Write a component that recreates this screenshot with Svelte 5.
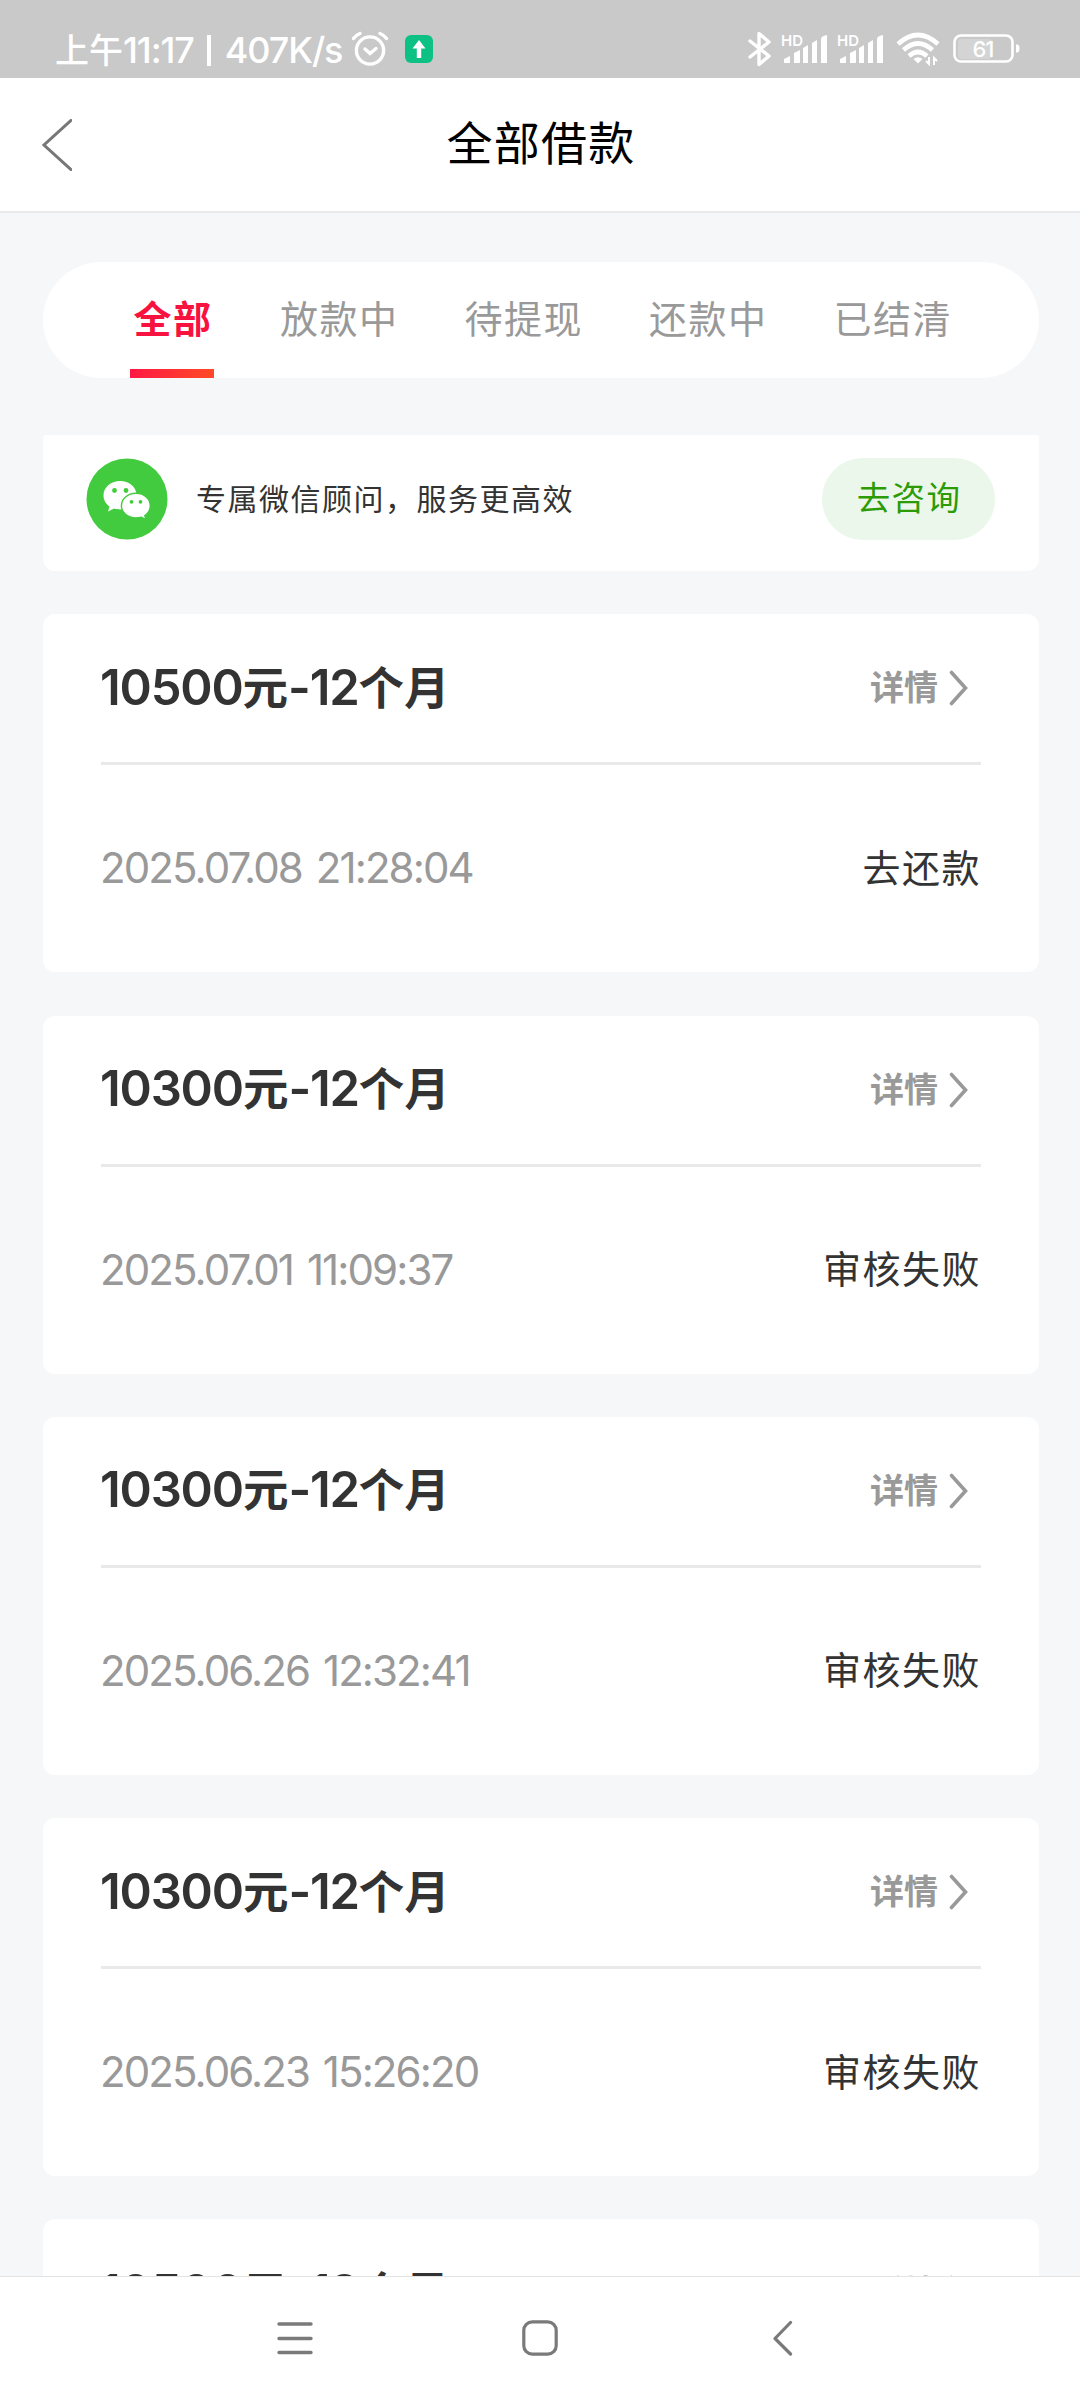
<script lang="ts">
  type Loan = { amount: string; term: string; time: string; status: string };

  const tabs = ['全部', '放款中', '待提现', '还款中', '已结清'];
  let active = $state(0);

  const loans: Loan[] = [
    { amount: '10500', term: '12', time: '2025.07.08 21:28:04', status: '去还款' },
    { amount: '10300', term: '12', time: '2025.07.01 11:09:37', status: '审核失败' },
    { amount: '10300', term: '12', time: '2025.06.26 12:32:41', status: '审核失败' },
    { amount: '10300', term: '12', time: '2025.06.23 15:26:20', status: '审核失败' },
    { amount: '10500', term: '12', time: '2025.06.20 10:15:36', status: '审核失败' }
  ];
</script>

{#snippet signal()}
  <svg class="signal" viewBox="0 0 46 32" fill="#fff">
    <text x="-1" y="13" font-size="15" font-weight="600" font-family="Inter, sans-serif">HD</text>
    <path d="M2 30v-4l6-3v7zM12 30V20l6-3v13zM21 30V15l5-3v18zM30 30V10l5-3v23zM39 30V6q0-3 6-4v28z" />
  </svg>
{/snippet}

<div class="screen">
  <div class="status-bar">
    <span class="clock">上午<span class="latin">11:17 <i></i> 407K/s</span></span>
    <svg class="alarm" viewBox="0 0 38 36" fill="none" stroke="#fff" stroke-width="3.4" stroke-linecap="round">
      <circle cx="19" cy="19.5" r="13.6" />
      <path d="M14 18l5 4.500 6-5M2.500 7.500Q5 4 9 2.500M35.500 7.500Q33 4 29 2.500" />
    </svg>
    <svg class="upload" viewBox="0 0 28 28">
      <rect width="28" height="28" rx="6" fill="#0cc183" />
      <path d="M14 5l6.500 8.500h-4.300V23h-4.400v-9.500H7.500z" fill="#fff" />
    </svg>
    <div class="indicators">
      <svg class="bluetooth" viewBox="0 0 24 36" fill="none" stroke="#fff" stroke-width="3.400" stroke-linejoin="round" stroke-linecap="round">
        <path d="M2 10l19 15-10 8.500V2.500L21 11 2 26" />
      </svg>
      {@render signal()}
      {@render signal()}
      <svg class="wifi" viewBox="0 0 46 34" fill="none" stroke="#fff" stroke-width="4.600">
        <path d="M2 12Q22-6 42 12M7.500 18Q22 5 36.500 18M13 24Q22 16 31 24" />
        <path d="M22 31.500l-4.500-4.500q4.500-3.500 9 0z" fill="#fff" stroke="none" />
        <path d="M33 25v7l-3-3M38 33v-7l3 3" stroke-width="2" />
      </svg>
      <svg class="battery" viewBox="0 0 68 30">
        <rect x="5" y="5" width="34" height="20" rx="3" fill="#d4d4d4" />
        <rect x="1.500" y="1.500" width="58" height="26" rx="6.500" fill="none" stroke="#fff" stroke-width="2.600" />
        <path d="M63 10.500h1q2.500 0 2.500 4t-2.500 4h-1z" fill="#fff" />
        <text x="30" y="22.500" font-size="22" font-weight="500" text-anchor="middle" letter-spacing="-1" font-family="Inter, sans-serif" fill="#fff">61</text>
      </svg>
    </div>
  </div>

  <header>
    <svg class="back" viewBox="0 0 30 52" fill="none" stroke="#777" stroke-width="3">
      <path d="M30 .500L2 26l28 25.500" />
    </svg>
    <h1>全部借款</h1>
  </header>

  <main>
    <nav class="tabs">
      {#each tabs as tab, i}
        <button class:active={active === i} onclick={() => (active = i)}>{tab}</button>
      {/each}
    </nav>

    <section class="advisor">
      <svg class="wechat" viewBox="0 0 82 82">
        <circle cx="41" cy="41" r="40.500" fill="#43cb3f" />
        <path d="M34 23C24.500 23 17.500 29.500 17.500 37.500c0 4.500 2.300 8.500 6 11l-1.500 5 6-3c2 .6 4 .9 6.500.9C43.500 51.400 50.500 45 50.500 37S43 23 34 23z" fill="#fff" />
        <path d="M50 35.300c-8.400 0-14.600 5.600-14.600 12.400S41.600 60 50 60c2 0 3.800-.3 5.400-.8l4.600 2.500-1.200-4.200c3.400-2.300 5.500-5.800 5.500-9.800 0-6.800-6-12.400-14.300-12.400z" fill="#fff" stroke="#43cb3f" stroke-width="1.400" />
        <g fill="#43cb3f">
          <circle cx="28.500" cy="32.500" r="2.400" />
          <circle cx="40" cy="32.500" r="2.400" />
          <circle cx="45.500" cy="43.800" r="1.900" />
          <circle cx="54.500" cy="43.800" r="1.900" />
        </g>
      </svg>
      <p>专属微信顾问，服务更高效</p>
      <button class="consult">去咨询</button>
    </section>

    {#each loans as loan}
      <article class="loan">
        <div class="loan-head">
          <h2><span class="num">{loan.amount}</span>元<span class="num">-{loan.term}</span>个月</h2>
          <div class="detail">
            <span>详情</span>
            <svg viewBox="0 0 19 36" fill="none" stroke="#999" stroke-width="3.600" stroke-linecap="round">
              <path d="M2.500 2.500L16.500 18l-14 15.500" />
            </svg>
          </div>
        </div>
        <div class="loan-body">
          <time>{loan.time}</time>
          <span class="state">{loan.status}</span>
        </div>
      </article>
    {/each}
  </main>

  <footer>
    <svg viewBox="0 0 36 36" stroke="#7a7a7a" stroke-width="3.400" stroke-linecap="round">
      <path d="M2 4h32M2 18.500h32M2 32.500h32" />
    </svg>
    <svg viewBox="0 0 36 36" fill="none" stroke="#7a7a7a" stroke-width="3.200">
      <rect x="1.800" y="1.800" width="32.400" height="32.400" rx="8.500" />
    </svg>
    <svg viewBox="0 0 36 36" fill="none" stroke="#7a7a7a" stroke-width="3.200" stroke-linecap="round" stroke-linejoin="round">
      <path d="M23.500 2.500L8 18.500l15.500 15.500" />
    </svg>
  </footer>
</div>

<style>
  :global(body) {
    margin: 0;
    background: #f6f7f9;
  }

  .screen {
    display: flex;
    flex-direction: column;
    width: 1080px;
    height: 2400px;
    overflow: hidden;
    background: #f6f7f9;
    font-family: 'Noto Sans CJK SC', sans-serif;
    color: #333;
  }

  svg {
    display: block;
    flex: none;
  }

  h1,
  h2,
  p {
    margin: 0;
    font-weight: 400;
  }

  button {
    padding: 0;
    border: 0;
    background: none;
    font-family: inherit;
  }

  .status-bar {
    display: flex;
    align-items: center;
    flex: none;
    box-sizing: border-box;
    height: 78px;
    padding: 20px 59px 0 55px;
    background: #c9c9c9;
    color: #fff;
  }

  .clock {
    width: 296px;
    font-size: 34px;
    font-weight: 500;
    line-height: 40px;
    white-space: nowrap;
  }

  .latin {
    font-family: Inter, sans-serif;
    font-size: 36px;
    letter-spacing: -1.1px;
  }

  /* divider between the clock and the network speed */
  .latin i {
    display: inline-block;
    width: 4px;
    height: 31px;
    margin: 0 5px;
    background: #fff;
    vertical-align: -3px;
  }

  .alarm {
    width: 38px;
    height: 36px;
  }

  .upload {
    width: 28px;
    height: 28px;
    margin-left: 16px;
  }

  .indicators {
    display: flex;
    align-items: center;
    margin-left: auto;
  }

  .bluetooth {
    width: 24px;
    height: 36px;
    margin-right: 10px;
  }

  .signal {
    width: 46px;
    height: 32px;
    margin-right: 10px;
    overflow: visible;
  }

  .wifi {
    width: 46px;
    height: 34px;
    margin-right: 11px;
    margin-left: 2px;
  }

  .battery {
    width: 68px;
    height: 30px;
  }

  header {
    display: flex;
    align-items: center;
    flex: none;
    box-sizing: border-box;
    height: 135px;
    padding: 0 70px 0 42px;
    border-bottom: 2px solid #e8eaed;
    background: #fff;
  }

  .back {
    width: 30px;
    height: 52px;
  }

  h1 {
    flex: 1;
    padding-bottom: 10px;
    text-align: center;
    font-size: 46px;
    line-height: 60px;
    letter-spacing: 1.2px;
    color: #000;
  }

  main {
    flex: 1;
    min-height: 0;
    overflow: hidden;
    padding: 49px 41px 0 43px;
  }

  .tabs {
    display: flex;
    gap: 64px;
    box-sizing: border-box;
    height: 116px;
    padding-left: 87px;
    border-radius: 58px;
    background: #fff;
  }

  .tabs button {
    display: flex;
    flex-direction: column;
    justify-content: space-between;
    padding: 25px 0 0 2px;
    font-size: 38px;
    line-height: 60px;
    letter-spacing: 1.5px;
    color: #999;
  }

  .tabs .active {
    width: 84px;
    font-weight: 700;
    color: #f8123f;
    border-bottom: 9px solid;
    border-image: linear-gradient(90deg, #ff1744, #ff4a26) 1;
    border-width: 0 0 9px;
  }

  .advisor {
    display: flex;
    align-items: center;
    box-sizing: border-box;
    height: 136px;
    margin-top: 57px;
    padding: 0 44px 8px 43px;
    border-radius: 3px 3px 12px 12px;
    background: #fff;
  }

  .wechat {
    width: 82px;
    height: 82px;
  }

  .advisor p {
    flex: 1;
    margin-left: 28px;
    padding-bottom: 4px;
    font-size: 30px;
    line-height: 44px;
    letter-spacing: 1.5px;
  }

  .consult {
    width: 173px;
    height: 82px;
    padding: 0 0 6px 1px;
    border-radius: 41px;
    background: #ebf7ea;
    font-size: 33.500px;
    line-height: 74px;
    letter-spacing: 1.3px;
    color: #2d9b05;
  }

  .loan {
    box-sizing: border-box;
    height: 358px;
    margin-top: 43.300px;
    padding: 0 58px;
    border-radius: 12px;
    background: #fff;
  }

  .loan-head {
    display: flex;
    align-items: center;
    justify-content: space-between;
    box-sizing: border-box;
    height: 151px;
    padding-right: 13px;
    border-bottom: 3px solid #e9e9e9;
  }

  h2 {
    margin-left: -1px;
    padding-bottom: 4px;
    font-size: 45.500px;
    font-weight: 700;
    line-height: 60px;
    white-space: nowrap;
  }

  .num {
    font-family: Inter, sans-serif;
    font-size: 49px;
    font-weight: 600;
    letter-spacing: -1.2px;
  }

  .detail {
    display: flex;
    align-items: center;
    gap: 11px;
    font-size: 34px;
    line-height: 50px;
    color: #999;
  }

  .detail span {
    padding-bottom: 4px;
    font-weight: 700;
  }

  .detail svg {
    width: 19px;
    height: 36px;
  }

  .loan-body {
    display: flex;
    align-items: center;
    justify-content: space-between;
    height: 206px;
  }

  time {
    margin-left: -1px;
    padding-bottom: 1px;
    font-family: Inter, sans-serif;
    font-size: 42px;
    letter-spacing: -1.9px;
    word-spacing: 4px;
    color: #999;
  }

  .state {
    padding-bottom: 6px;
    font-size: 38px;
    letter-spacing: 1.5px;
  }

  footer {
    display: flex;
    align-items: center;
    justify-content: center;
    gap: 209px;
    flex: none;
    box-sizing: border-box;
    height: 124px;
    padding-bottom: 1px;
    border-top: 1px solid #e4e4e4;
    background: #fff;
  }

  footer svg {
    width: 36px;
    height: 36px;
  }
</style>
